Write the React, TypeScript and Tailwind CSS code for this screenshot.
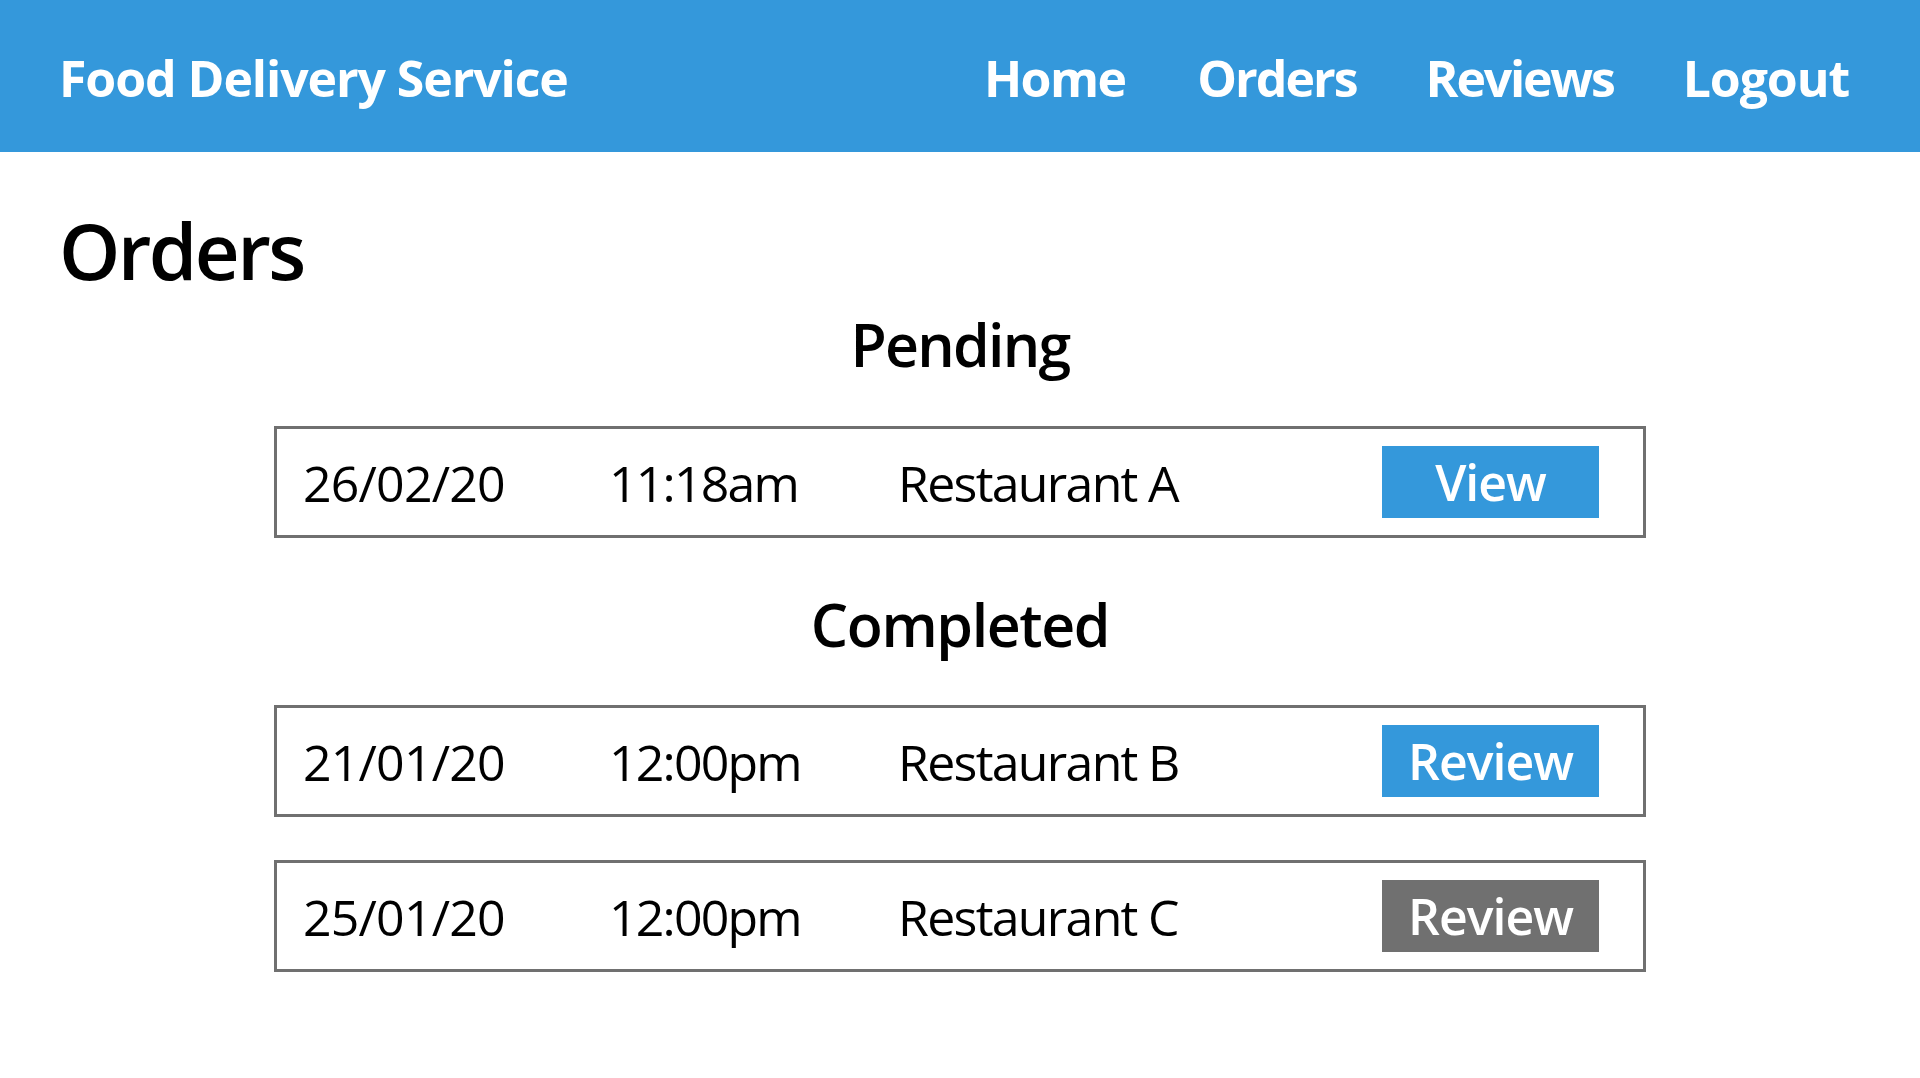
import React from 'react'

type Order = {
  date: string
  time: string
  restaurant: string
  action: string
  disabled?: boolean
}

const pending: Order[] = [{ date: '26/02/20', time: '11:18am', restaurant: 'Restaurant A', action: 'View' }]

const completed: Order[] = [
  { date: '21/01/20', time: '12:00pm', restaurant: 'Restaurant B', action: 'Review' },
  { date: '25/01/20', time: '12:00pm', restaurant: 'Restaurant C', action: 'Review', disabled: true },
]

function OrderRow({ order }: { order: Order }) {
  return (
    <div className="flex items-center h-[112px] w-[1372px] mx-auto border-[3px] border-[#707070] pl-[26px] pr-[44px] pt-[2px]">
      <span className="w-[306px] text-[50px] leading-[50px] tracking-[-0.8px]">{order.date}</span>
      <span className="w-[289px] text-[50px] leading-[50px] tracking-[-1.8px]">{order.time}</span>
      <span className="flex-1 text-[50px] leading-[50px] tracking-[-1.7px]">{order.restaurant}</span>
      <button
        className={`w-[217px] h-[72px] -mt-[2px] flex items-center justify-center text-white text-[50px] leading-[50px] font-semibold tracking-[-1px] ${
          order.disabled ? 'bg-[#707070]' : 'bg-[#3498db]'
        }`}
      >
        {order.action}
      </button>
    </div>
  )
}

export default function App() {
  return (
    <div className="min-h-[1078px] bg-white text-black font-['Open_Sans',sans-serif]">
      <header className="h-[152px] bg-[#3498db] flex items-center justify-between pl-[59px] pr-[71px] pt-[4px] text-white">
        <div className="text-[50px] leading-[50px] font-bold tracking-[-1.1px]">Food Delivery Service</div>
        <nav className="flex items-center gap-[69px] text-[50px] leading-[50px] font-bold tracking-[-1.6px]">
          <a href="#" className="mr-[3px]">Home</a>
          <a href="#" className="tracking-[-2px]">Orders</a>
          <a href="#" className="tracking-[-2.2px]">Reviews</a>
          <a href="#" className="tracking-[-1.1px]">Logout</a>
        </nav>
      </header>

      <main className="px-[59px]">
        <h1 className="mt-[59px] text-[78px] leading-[78px] font-semibold tracking-[-2.6px]">Orders</h1>

        <h2 className="mt-[25px] text-center text-[59px] leading-[60px] font-semibold tracking-[-1.7px]">Pending</h2>
        <div className="mt-[52px] flex flex-col gap-[43px]">
          {pending.map((o) => (
            <OrderRow key={o.date} order={o} />
          ))}
        </div>

        <h2 className="mt-[56px] text-center text-[59px] leading-[60px] font-semibold tracking-[-1.4px]">Completed</h2>
        <div className="mt-[51px] flex flex-col gap-[43px]">
          {completed.map((o) => (
            <OrderRow key={o.date} order={o} />
          ))}
        </div>
      </main>
    </div>
  )
}
